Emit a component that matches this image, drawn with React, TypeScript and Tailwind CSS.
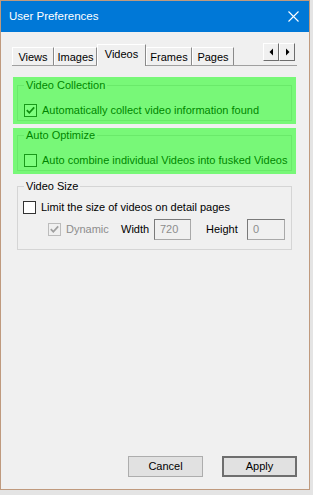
import React from "react";

const font = { fontFamily: '"Liberation Sans", Arial, sans-serif' };

function Check({ checked, disabled }: { checked?: boolean; disabled?: boolean }) {
  return (
    <div
      className={
        "w-[13px] h-[13px] shrink-0 border flex items-center justify-center " +
        (disabled ? "border-[#bcbcbc] bg-[#f0f0f0]" : "border-[#333333] bg-white")
      }
    >
      {checked && (
        <svg width="11" height="11" viewBox="0 0 11 11">
          <path
            d="M1.8 5.2 L4.3 7.8 L9.2 2.4"
            fill="none"
            stroke={disabled ? "#a0a0a0" : "#222222"}
            strokeWidth="1.8"
          />
        </svg>
      )}
    </div>
  );
}

function Tab({ label, w, selected }: { label: string; w: string; selected?: boolean }) {
  return (
    <div
      className={
        "flex items-center justify-center border-t border-l border-t-white border-l-white border-r border-r-[#8a8a8a] text-[11px] text-black " +
        w +
        (selected
          ? " h-[22px] relative z-10 -mb-px bg-[#f0f0f0] pb-[3px]"
          : " h-[18px] bg-[#f0f0f0] pt-[1px]")
      }
    >
      {label}
    </div>
  );
}

function Highlight({ children, className }: { children: React.ReactNode; className?: string }) {
  return (
    <div className={"relative " + (className ?? "")}>
      {children}
      <div className="absolute inset-0 bg-[#00ff00]/50 pointer-events-none" />
    </div>
  );
}

export default function App() {
  return (
    <div className="w-[313px] h-[495px] bg-[#e4e4e4] overflow-hidden whitespace-nowrap" style={font}>
      <div className="w-[310px] h-[490px] border border-[#bf9a7e] flex flex-col bg-[#f0f0f0]">
        {/* Title bar */}
        <div className="h-[31px] bg-[#0078d7] flex items-center pl-[8px] pr-[10px] text-white text-[11.5px] shrink-0">
          <span className="flex-1">User Preferences</span>
          <svg width="11" height="11" viewBox="0 0 11 11">
            <path d="M0.5 0.5 L10.5 10.5 M10.5 0.5 L0.5 10.5" stroke="white" strokeWidth="1.1" />
          </svg>
        </div>

        {/* Body */}
        <div className="flex-1 flex flex-col pt-[11px] pl-[11px] pr-[12px]">
          {/* Tab strip */}
          <div className="flex items-end h-[22px]">
            <Tab label="Views" w="w-[42px]" />
            <Tab label="Images" w="w-[43px]" />
            <Tab label="Videos" w="w-[49px]" selected />
            <Tab label="Frames" w="w-[46px]" />
            <Tab label="Pages" w="w-[42px]" />
            <div className="flex-1" />
            <div className="self-start flex mr-[2px]">
              {["l", "r"].map((d) => (
                <div
                  key={d}
                  className="w-[16px] h-[18px] bg-[#f0f0f0] border border-t-white border-l-white border-r-[#6d6d6d] border-b-[#6d6d6d] flex items-center justify-center"
                >
                  <svg width="5" height="8" viewBox="0 0 5 8">
                    {d === "l" ? (
                      <path d="M4 0.5 L0.5 4 L4 7.5 Z" fill="black" />
                    ) : (
                      <path d="M1 0.5 L4.5 4 L1 7.5 Z" fill="black" />
                    )}
                  </svg>
                </div>
              ))}
            </div>
          </div>

          {/* Panel */}
          <div className="flex-1 border-t border-t-[#a0a0a0] px-px pt-[11px] flex flex-col text-[11px] text-black">
            <Highlight className="pt-px pb-[3px] px-[4px]">
              <fieldset className="border border-[#d5d5d5] pl-[6px] pt-[11px] pb-[2px]">
                <legend className="px-[2px] leading-[14px]">Video Collection</legend>
                <div className="flex items-center gap-[5px] h-[15px]">
                  <Check checked />
                  <span>Automatically collect video information found</span>
                </div>
              </fieldset>
            </Highlight>

            <Highlight className="mt-[4px] pt-0 pb-[3px] px-[4px]">
              <fieldset className="border border-[#d5d5d5] pl-[6px] pt-[11px] pb-[2px]">
                <legend className="px-[2px] leading-[14px]">Auto Optimize</legend>
                <div className="flex items-center gap-[5px] h-[15px]">
                  <Check />
                  <span>Auto combine individual Videos into fusked Videos</span>
                </div>
              </fieldset>
            </Highlight>

            <fieldset className="mt-[5px] mx-[4px] border border-[#d5d5d5] pl-[5px] pt-[7px] pb-[9px]">
              <legend className="ml-[1px] px-[2px] leading-[14px]">Video Size</legend>
              <div className="flex items-center gap-[5px] h-[15px]">
                <Check />
                <span>Limit the size of videos on detail pages</span>
              </div>
              <div className="flex items-center h-[21px] mt-[4px] pl-[25px]">
                <Check checked disabled />
                <span className="ml-[5px] w-[55px] text-[#8d8d8d]">Dynamic</span>
                <span className="w-[33px]">Width</span>
                <div className="w-[37px] h-[21px] border border-[#a9a9a9] border-t-[#7a7a7a] border-l-[#7a7a7a] bg-[#f0f0f0] text-[#8d8d8d] flex items-center pl-[5px]">
                  720
                </div>
                <span className="ml-[15px] w-[41px]">Height</span>
                <div className="w-[38px] h-[21px] border border-[#a9a9a9] border-t-[#7a7a7a] border-l-[#7a7a7a] bg-[#f0f0f0] text-[#8d8d8d] flex items-center pl-[5px]">
                  0
                </div>
              </div>
            </fieldset>
          </div>

          {/* Buttons */}
          <div className="flex justify-end gap-[19px] pb-[12px] pr-0 text-[11px] text-black">
            <button className="w-[75px] h-[21px] bg-[#e1e1e1] border border-[#adadad] flex items-center justify-center">
              Cancel
            </button>
            <button className="w-[75px] h-[21px] bg-[#e1e1e1] border-2 border-[#6e6e6e] flex items-center justify-center">
              Apply
            </button>
          </div>
        </div>
      </div>
    </div>
  );
}
